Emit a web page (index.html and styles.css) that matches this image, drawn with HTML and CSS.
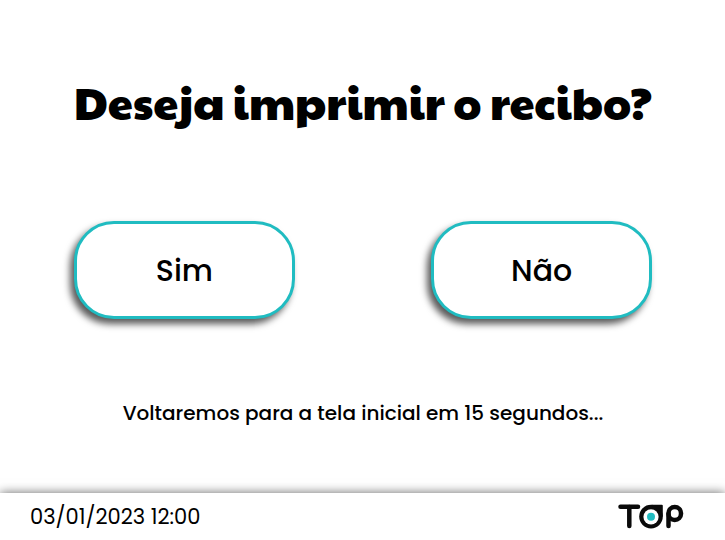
FILE: index.html
```html
<!DOCTYPE html>
<html lang="pt-BR">
<head>
  <meta charset="utf-8">
  <meta name="viewport" content="width=device-width, initial-scale=1">
  <title>Recibo</title>
  <link rel="stylesheet" href="styles.css">
</head>
<body>
  <main class="content">
    <h1 class="title">Deseja imprimir o recibo?</h1>
    <div class="actions">
      <button class="choice" type="button">Sim</button>
      <button class="choice" type="button">Não</button>
    </div>
    <p class="notice">Voltaremos para a tela inicial em 15 segundos...</p>
  </main>
  <footer class="footer">
    <time class="clock" datetime="2023-01-03T12:00">03/01/2023 12:00</time>
    <svg class="logo" viewBox="0 0 66 26" role="img" aria-label="TOP">
      <g fill="none" stroke="#0a0a0a" stroke-width="4.5" stroke-linecap="round">
        <line x1="2.5" y1="2.8" x2="20" y2="2.8"/>
        <line x1="11.3" y1="3" x2="11.3" y2="22"/>
        <line x1="50.5" y1="10" x2="50.5" y2="22"/>
        <rect x="50.5" y="3" width="12.5" height="13" rx="6.25"/>
      </g>
      <circle cx="33" cy="12.6" r="11.8" fill="#0a0a0a"/>
      <rect x="33" y="0.8" width="11.8" height="12" rx="1" fill="#0a0a0a"/>
      <circle cx="33" cy="12.8" r="7.6" fill="#fff"/>
      <circle cx="33" cy="12.8" r="4" fill="#20bcc1"/>
    </svg>
  </footer>
</body>
</html>
```
FILE: styles.css
```css
* {
  box-sizing: border-box;
}

body {
  display: flex;
  flex-direction: column;
  min-height: 100vh;
  margin: 0;
  background: #fff;
  color: #000;
  font-family: Poppins, Inter, sans-serif;
}

.content {
  flex: 1;
  padding: 70px 73px 0 74px;
}

.title {
  margin: 0;
  font-family: "Paytone One", Lato, sans-serif;
  font-size: 45px;
  font-weight: 400;
  line-height: 64px;
  text-align: center;
  white-space: nowrap;
}

.actions {
  display: flex;
  justify-content: space-between;
  margin-top: 87px;
}

.choice {
  width: 38.2%;
  padding: 23px 22px 21px;
  border: 3px solid #20bcc1;
  border-radius: 40px;
  background: #fff;
  box-shadow: -4px 5px 7px rgba(0, 0, 0, 0.65);
  color: #000;
  font: inherit;
  font-size: 30px;
  font-weight: 500;
  line-height: 48px;
}

.notice {
  margin: 78px 0 0;
  font-size: 20px;
  font-weight: 500;
  line-height: 32px;
  text-align: center;
}

.footer {
  display: flex;
  align-items: center;
  justify-content: space-between;
  padding: 8px 41px 8px 30px;
  background: #fff;
  box-shadow: 0 0 10px rgba(0, 0, 0, 0.6);
}

.clock {
  font-size: 21px;
  line-height: 31px;
}

.logo {
  width: 66px;
  height: 26px;
}
```
